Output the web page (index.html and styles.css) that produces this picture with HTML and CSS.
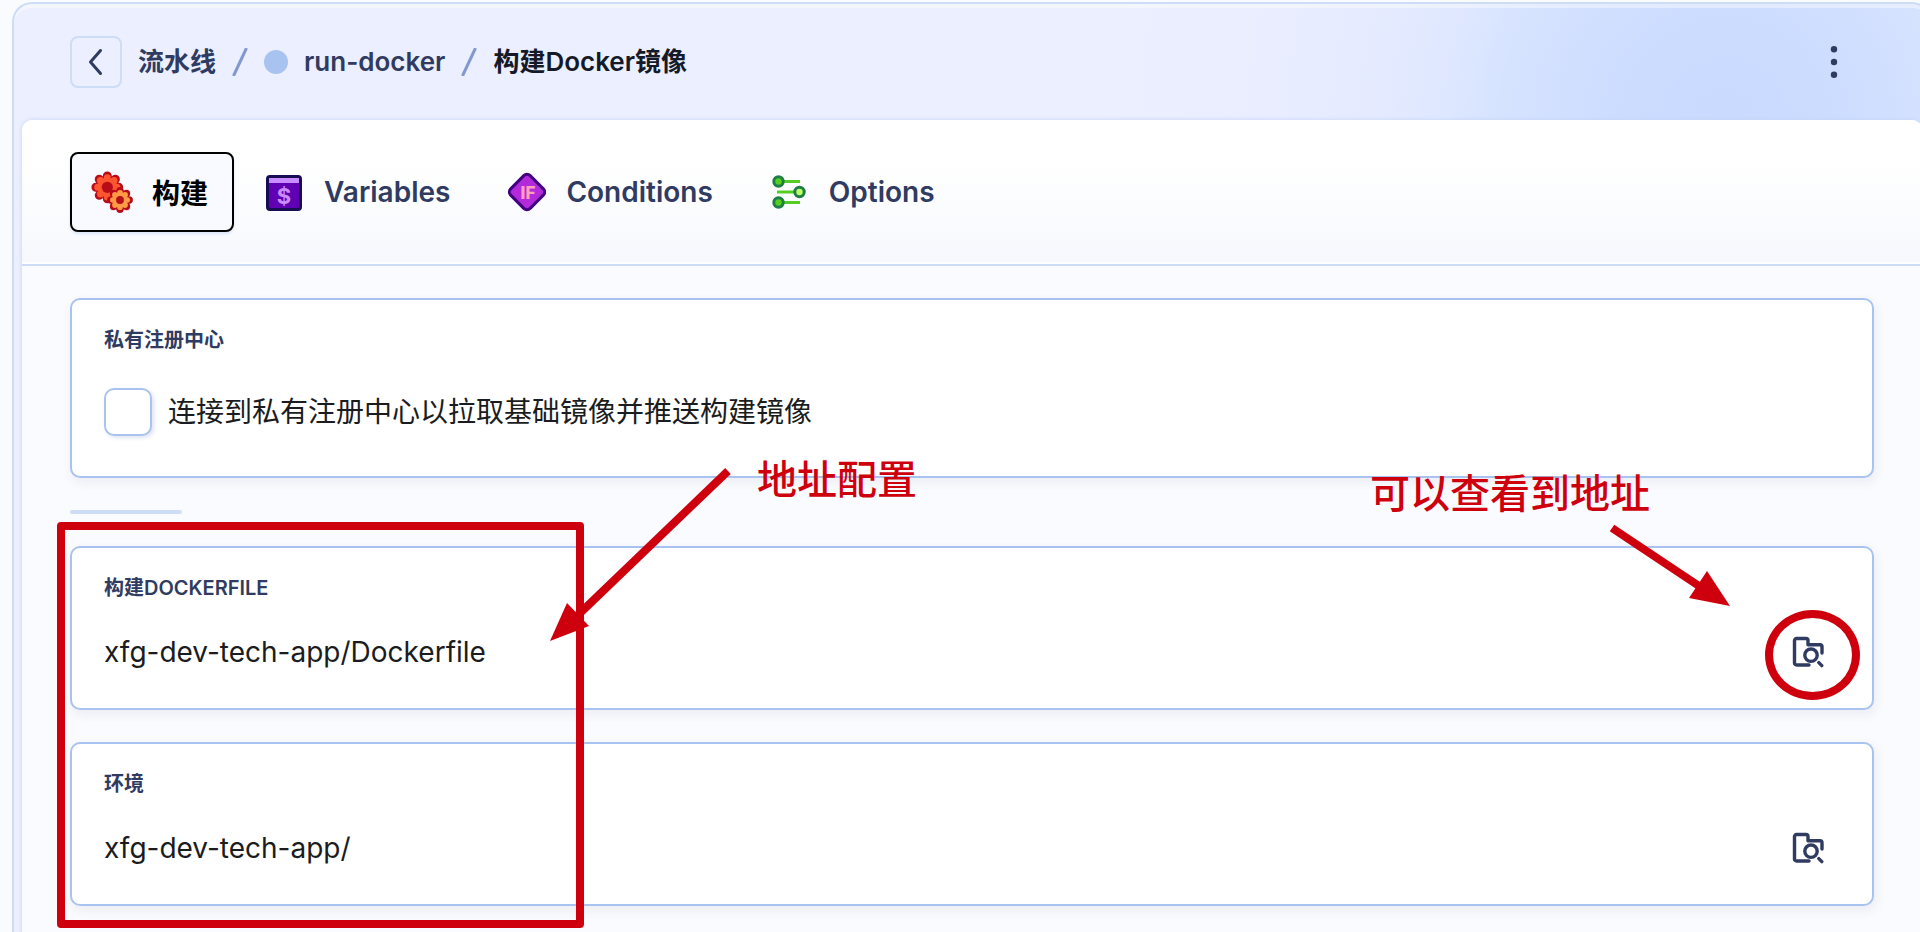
FILE: index.html
```html
<!DOCTYPE html>
<html lang="zh-CN">
<head>
<meta charset="utf-8">
<meta name="viewport" content="width=device-width, initial-scale=1">
<title>构建Docker镜像</title>
<link rel="stylesheet" href="styles.css">
</head>
<body>
<svg class="sprite" aria-hidden="true">
  <symbol id="folder-search" viewBox="0 0 32 32">
    <g fill="none" stroke="currentColor" stroke-width="3.4" stroke-linecap="round" stroke-linejoin="round">
      <path d="M17 29H4.500a2 2 0 0 1-2-2V4.500a2 2 0 0 1 2-2H14a2 2 0 0 1 2 2V8.800H28a2 2 0 0 1 2 2V17"/>
      <circle cx="19" cy="19.200" r="6.200"/>
      <path d="M26.800 26.600l3 3"/>
    </g>
  </symbol>
</svg>
<div class="shell">
  <header class="topbar">
    <button class="back" type="button" aria-label="返回">
      <svg width="24" height="32" viewBox="0 0 24 32"><path d="M16.500 4.500L6.500 16l10 11.500" fill="none" stroke="currentColor" stroke-width="3" stroke-linecap="round" stroke-linejoin="round"/></svg>
    </button>
    <nav class="crumbs">
      <a href="#">流水线</a>
      <svg class="slash" width="16" height="28" viewBox="0 0 16 28"><path d="M1.500 28L14.500 0" stroke="currentColor" stroke-width="3"/></svg>
      <span class="dot"></span>
      <a href="#">run-docker</a>
      <svg class="slash" width="16" height="28" viewBox="0 0 16 28"><path d="M1.500 28L14.500 0" stroke="currentColor" stroke-width="3"/></svg>
      <span class="current">构建Docker镜像</span>
    </nav>
    <button class="more" type="button" aria-label="更多">
      <svg width="8" height="32" viewBox="0 0 8 32" fill="currentColor"><circle cx="4" cy="3.200" r="3.200"/><circle cx="4" cy="16" r="3.200"/><circle cx="4" cy="28.800" r="3.200"/></svg>
    </button>
  </header>
  <main class="panel">
    <nav class="tabs">
      <button class="tab active" type="button">
        <svg class="gears" width="40" height="40" viewBox="0 0 40 40">
          <g stroke-linecap="round" stroke-dasharray="0 1">
            <circle cx="15.300" cy="15.300" r="11.400" pathLength="8" fill="#b80d18" stroke="#b80d18" stroke-width="9"/>
            <circle cx="15.300" cy="15.300" r="9.600" pathLength="8" fill="#ff5530" stroke="#ff5530" stroke-width="7"/>
          </g>
          <circle cx="15.300" cy="15.300" r="5.600" fill="#b80d18"/>
          <g stroke-linecap="round" stroke-dasharray="0 1">
            <circle cx="28" cy="28" r="9.200" pathLength="8" fill="#b80d18" stroke="#b80d18" stroke-width="7.400"/>
            <circle cx="28" cy="28" r="7.200" pathLength="8" fill="#ff9b47" stroke="#ff9b47" stroke-width="5.600"/>
          </g>
          <circle cx="28" cy="28" r="3.900" fill="#b80d18"/>
        </svg>
        <span>构建</span>
      </button>
      <button class="tab" type="button">
        <svg width="40" height="40" viewBox="0 0 40 40">
          <rect x="3.500" y="4.500" width="33" height="33" rx="2.500" fill="#5f00b2" stroke="#180c55" stroke-width="3"/>
          <rect x="5" y="6" width="30" height="5" fill="#c98cff"/>
          <text x="20" y="31.500" text-anchor="middle" class="glyph dollar">$</text>
        </svg>
        <span>Variables</span>
      </button>
      <button class="tab" type="button">
        <svg width="40" height="40" viewBox="0 0 40 40">
          <rect x="7.200" y="6.200" width="27.600" height="27.600" rx="4.500" transform="rotate(45 21 20)" fill="#b32adb" stroke="#430080" stroke-width="3"/>
          <text x="22" y="26.500" text-anchor="middle" class="glyph if">IF</text>
        </svg>
        <span>Conditions</span>
      </button>
      <button class="tab" type="button">
        <svg width="40" height="40" viewBox="0 0 40 40">
          <path d="M9 9.500H31M8 20H30M9 30.500H31" stroke="#54cf20" stroke-width="3"/>
          <g fill="#54cf20" stroke="#1f7d46" stroke-width="3">
            <circle cx="9.500" cy="9.500" r="4.700"/><circle cx="30.500" cy="20" r="4.700" fill="#bdff66"/><circle cx="9.500" cy="30.500" r="4.700"/>
          </g>
        </svg>
        <span>Options</span>
      </button>
    </nav>
    <form class="content">
      <section class="card">
        <h2 class="label">私有注册中心</h2>
        <label class="check"><input type="checkbox"><span>连接到私有注册中心以拉取基础镜像并推送构建镜像</span></label>
      </section>
      <div class="divider"></div>
      <section class="card">
        <label class="label" for="dockerfile">构建DOCKERFILE</label>
        <div class="field">
          <input id="dockerfile" type="text" value="xfg-dev-tech-app/Dockerfile">
          <button type="button" aria-label="浏览文件"><svg width="32" height="32"><use href="#folder-search"/></svg></button>
        </div>
      </section>
      <section class="card">
        <label class="label" for="context">环境</label>
        <div class="field">
          <input id="context" type="text" value="xfg-dev-tech-app/">
          <button type="button" aria-label="浏览目录"><svg width="32" height="32"><use href="#folder-search"/></svg></button>
        </div>
      </section>
    </form>
  </main>
</div>
<div class="note note-box"></div>
<svg class="note note-arrow-left" width="190" height="180" viewBox="0 0 190 180"><path d="M178 11L28 155" stroke="currentColor" stroke-width="8"/><path d="M0 181L17 143L39 166Z" fill="currentColor"/></svg>
<p class="note note-text-left">地址配置</p>
<p class="note note-text-right">可以查看到地址</p>
<svg class="note note-arrow-right" width="130" height="90" viewBox="0 0 130 90"><path d="M12 8L102 68" stroke="currentColor" stroke-width="8"/><path d="M130 86L107 51L89 78Z" fill="currentColor"/></svg>
<div class="note note-ring"></div>
</body>
</html>
```
FILE: styles.css
```css
* { box-sizing: border-box; }
body {
  margin: 0;
  height: 100vh;
  overflow: hidden;
  position: relative;
  background: #fafbff;
  color: #1b1c20;
  font-family: Inter, "Noto Sans CJK SC", sans-serif;
  font-size: 28px;
}
button, input { font: inherit; color: inherit; }
button { cursor: pointer; }
svg { flex: none; display: block; }
.sprite { display: none; }

.shell {
  margin: 2px -12px 0 12px;
  min-height: 100vh;
  padding: 0 8px;
  border: 2px solid #cddcf7;
  border-bottom: 0;
  border-radius: 20px 20px 0 0;
  background: radial-gradient(circle at calc(100% - 205px) 120px, #cadafe 0, #ccdcff 100px, #d1dfff 160px, #d6e3ff 225px, #dfe8ff 290px, #e4eaff 340px, #e9edff 450px, #ebefff 620px);
  box-shadow: inset 0 4px 0 rgba(255, 255, 255, .4);
}
.topbar {
  display: flex;
  align-items: center;
  gap: 16px;
  height: 116px;
  padding: 0 62px 0 48px;
  color: #303b61;
}
.back {
  display: grid;
  place-items: center;
  width: 52px;
  height: 52px;
  padding: 0;
  border: 2px solid #cddcf7;
  border-radius: 8px;
  background: transparent;
}
.crumbs {
  display: flex;
  align-items: center;
  gap: 16px;
  font-size: 26px;
  font-weight: 600;
  line-height: 32px;
}
.crumbs a { color: inherit; text-decoration: none; }
.current { color: #151a28; }
.slash { color: #8398cf; }
.dot { width: 24px; height: 24px; border-radius: 50%; background: #a9c3f0; }
.more {
  display: grid;
  place-items: center;
  width: 52px;
  height: 52px;
  margin-left: auto;
  padding: 0;
  border: 0;
  background: transparent;
}

.panel {
  min-height: calc(100vh - 120px);
  border-radius: 10px 10px 0 0;
  background: #fafbfe;
  box-shadow: 0 0 4px #c3d3f3;
}
.tabs {
  display: flex;
  gap: 8px;
  padding: 32px 48px;
  border-bottom: 2px solid #cddcf7;
  border-radius: 10px 10px 0 0;
  background: linear-gradient(#fff 30%, #f6f8fd);
  box-shadow: inset 0 -2px 0 #fff;
}
.tab {
  display: flex;
  align-items: center;
  gap: 20px;
  height: 80px;
  padding: 0 24px 0 20px;
  border: 2px solid transparent;
  border-radius: 8px;
  background: transparent;
  color: #303b61;
  font-weight: 600;
}
.tab.active {
  border-color: #000;
  background: #f9faff;
  color: #000;
  box-shadow: 0 2px 3px #dbe6f8;
}
.gears { overflow: visible; }
.glyph { font-family: Inter, sans-serif; font-weight: 700; }
.dollar { font-size: 22px; fill: #c98cff; }
.if { font-size: 17px; font-weight: 800; fill: #ff9fbd; }

.content {
  display: flex;
  flex-direction: column;
  gap: 32px;
  padding: 32px 48px;
}
.card {
  padding: 28px 32px 26px;
  border: 2px solid #a9c3f0;
  border-radius: 10px;
  background: #fff;
  box-shadow: 2px 4px 8px 2px #eff0f7;
}
.label {
  display: block;
  margin: 0;
  color: #303b61;
  font-size: 20px;
  font-weight: 600;
  line-height: 24px;
}
.check {
  display: flex;
  align-items: center;
  gap: 16px;
  margin: 36px 0 14px;
  line-height: 48px;
}
.check input {
  appearance: none;
  width: 48px;
  height: 48px;
  margin: 0;
  border: 2px solid #a9c3f0;
  border-radius: 10px;
  background: #fff;
  box-shadow: 2px 2px 4px #dfe3ef;
}
.field {
  display: flex;
  align-items: center;
  gap: 16px;
  height: 48px;
  margin: 28px 0 6px;
}
.field input {
  flex: 1;
  min-width: 0;
  height: 48px;
  padding: 0;
  border: 0;
  outline: 0;
  background: transparent;
}
.field button {
  width: 64px;
  height: 48px;
  padding: 0 16px;
  border: 0;
  background: transparent;
  color: #303b61;
}
.divider { width: 112px; height: 4px; border-radius: 2px; background: #cddcf7; }

.note { position: absolute; margin: 0; color: #cf000e; pointer-events: none; font-size: 40px; font-weight: 500; line-height: 48px; overflow: visible; }
.note-box { left: 57px; top: 522px; width: 527px; height: 406px; border: 8px solid; border-radius: 4px; }
.note-arrow-left { left: 550px; top: 460px; }
.note-text-left { left: 757px; top: 456px; }
.note-text-right { right: 270px; top: 470px; }
.note-arrow-right { right: 190px; top: 520px; }
.note-ring { right: 60px; top: 610px; width: 95px; height: 90px; border: 8px solid; border-radius: 50%; }
```
